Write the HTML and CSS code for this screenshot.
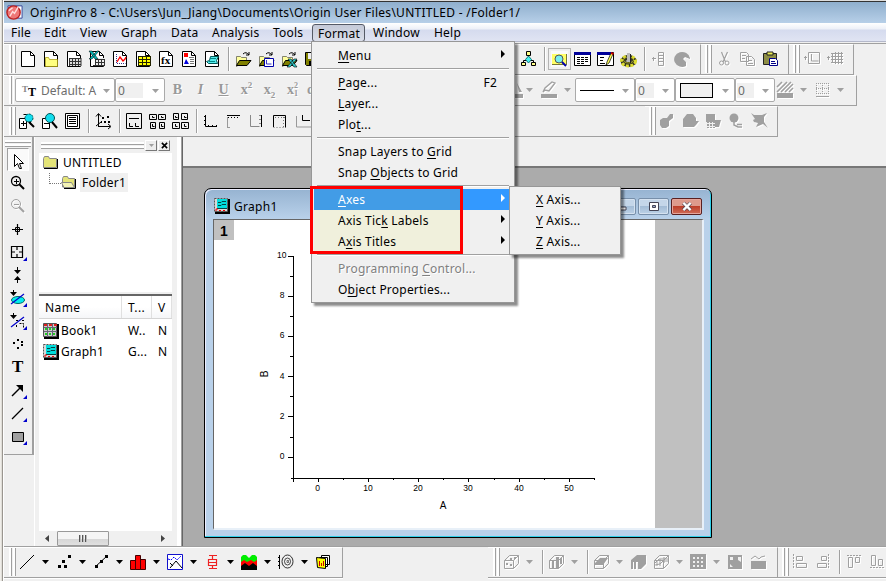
FILE: index.html
```html
<!DOCTYPE html>
<html lang="en">
<head>
<meta charset="utf-8">
<title>OriginPro 8</title>
<link rel="stylesheet" href="styles.css">
</head>
<body>
<svg class="defs" aria-hidden="true">
  <symbol id="page" viewBox="0 0 17 16"><path d="M1.5.5h9l4 4v11h-13z" fill="#fff" stroke="#000"/><path d="M10.500.5v4h4" fill="none" stroke="#000"/></symbol>
  <symbol id="folder" viewBox="0 0 17 16"><path d="M1.500 5.500h4l1 1h5v4H5l-3 5h-.5z" fill="#ffff9c" stroke="#665" stroke-width=".8"/><path d="M4.500 9.500h11.500l-4 5H1.500z" fill="#808000" stroke="#000"/><path d="M8 3q3-3 6 1m0-3v3h-3" fill="none" stroke="#000"/></symbol>
  <symbol id="cube" viewBox="0 0 17 16"><path d="M1.500 6.500l5-5h9v8l-5 5h-9zM1.500 6.500h9v8m0-8l5-5" fill="none" stroke="#a0a0a0"/></symbol>
  <symbol id="corner" viewBox="0 0 4 4"><path d="M4 0v4H0z" fill="#00c"/></symbol>
  <symbol id="down" viewBox="0 0 7 4"><path d="M0 0h7L3.500 4z"/></symbol>
  <symbol id="graphicon" viewBox="0 0 16 16"><path d="M1 1h15v15H1z" fill="#000"/><path d="M.5.5h13v13H.5z" fill="#d8d8d8" stroke="#555" stroke-dasharray="2 1"/><path d="M3 1h10v10H3z" fill="#0dd"/><path d="M4 4.500h3l1-1h4M4 7.500h3l1-1h4M3 10.500h10" stroke="#044" fill="none"/><path d="M1 12h2v-2M5 12.500h2m2 0h2" stroke="#e00" fill="none"/></symbol>
</svg>

<div class="app">
  <header class="titlebar">
    <svg class="logo" viewBox="0 0 18 18"><path d="M2 2h15v13H4z" fill="#fff" stroke="#349"/><circle cx="8" cy="9" r="7" fill="#e77" stroke="#b22" stroke-width="1.500"/><path d="M4 13l3-5 2 2 4-7M3 7l4-3" stroke="#fdd" fill="none" stroke-width="1.500"/></svg>
    <span>OriginPro 8 - C:\Users\Jun_Jiang\Documents\Origin User Files\UNTITLED - /Folder1/</span>
  </header>
  <nav class="menubar">
    <span class="m-file">File</span><span class="m-edit">Edit</span><span class="m-view">View</span><span class="m-graph">Graph</span><span class="m-data">Data</span><span class="m-analysis">Analysis</span><span class="m-tools">Tools</span><span class="m-format">Format</span><span class="m-window">Window</span><span class="m-help">Help</span>
  </nav>

  <div class="bars">
    <div class="row">
      <div class="bar lead1">
        <i class="grip"></i>
        <svg class="ic"><use href="#page"/></svg>
        <svg class="ic"><use href="#page"/><path d="M2.500 6.500h3l1 2h8v7h-12z" fill="#ffff80" stroke="#a09000" stroke-width=".7"/></svg>
        <svg class="ic"><use href="#page"/><path d="M3 7h12v8H3z" fill="#ddd"/><path d="M3 7.500h12M3 10.500h12M3 13.500h12M3.500 7v8M6.500 7v8M9.500 7v8M12.500 7v8M15 7v8" stroke="#333"/></svg>
        <svg class="ic"><use href="#page"/><path d="M6 7h10v8H6z" fill="#eee"/><path d="M6 8.500h10M6 11.500h10M4 14.500h12M6.500 8v7M9.500 8v7M12.500 8v7M15.500 8v7" stroke="#333"/><path d="M0 0h3l6 8H6zM8 0h2L3 8H0z" fill="#0bb" stroke="#000" stroke-width=".5"/></svg>
        <svg class="ic"><use href="#page"/><path d="M4.500 3v9.500h9" stroke="#338" fill="none" stroke-dasharray="1 1"/><path d="M5 11l3-5 3 4 2-2 1-2" stroke="#f00" fill="none" stroke-width="1.300"/></svg>
        <svg class="ic"><use href="#page"/><path d="M3 5h13v10H3z" fill="#ff0"/><path d="M3 5.500h13M3 8.500h13M3 11.500h13M3 14.500h13M3.500 5v10M7.500 5v10M11.500 5v10M15.500 5v10" stroke="#220"/></svg>
        <svg class="ic"><use href="#page"/><text x="3" y="13" class="fx">fx</text></svg>
        <svg class="ic"><use href="#page"/><path d="M3 2h4v4H3z" fill="#f00"/><path d="M3 13l2-5 3 5z" fill="#00d"/><path d="M8 6.500h5M9 8.500h4M9 10.500h4M9 12.500h4" stroke="#777"/></svg>
        <svg class="ic"><use href="#page"/><path d="M6.500 5.500h8l-2 4 1 3h-9l-2-2 3-1z" fill="#5ee" stroke="#055"/><path d="M6 7.500h6M5 10.500h6" stroke="#088"/></svg>
        <i class="sep"></i>
        <svg class="ic"><use href="#folder"/></svg>
        <svg class="ic"><use href="#folder"/><path d="M6.500 7.500h9v8h-9z" fill="#fff" stroke="#00a"/><path d="M8.500 9v4h5" stroke="#33c" fill="none"/></svg>
        <svg class="ic"><use href="#folder"/><path d="M7 8h3l6 8h-3zM13 8h3l-7 8H6z" fill="#3cc" stroke="#000" stroke-width=".6"/></svg>
        <svg class="ic"><path d="M1.500 1.500h14v13h-13l-1-1z" fill="#808000" stroke="#000"/><path d="M4 2h8v6H4z" fill="#eee"/><path d="M5 10h7v4H5z"/></svg>
      </div>
      <div class="bar tail1">
        <svg class="ic"><path d="M8.500 4v5M3.500 12V9.500h10V12" stroke="#000" fill="none"/><path d="M6.500.5h4v4h-4zM1.500 11.500h4v3h-4zM11.500 11.500h4v3h-4z" fill="#ff8" stroke="#000"/><path d="M8.500 5l3 3.500-3 3.500-3-3.500z" fill="#4ee" stroke="#177"/></svg>
        <i class="sep"></i>
        <svg class="ic pressed"><path d="M1 3h15v11H1z" fill="#ff6"/><path d="M1 13.500h12M15.500 3v11" stroke="#773"/><circle cx="8" cy="8" r="4" fill="#7ee" stroke="#555"/><path d="M11 11l4 4" stroke="#00a" stroke-width="2"/></svg>
        <svg class="ic"><path d="M.5 1.500h16v13H.5z" fill="#fff" stroke="#000"/><path d="M0 1h17v3H0z" fill="#009"/><path d="M3 6.500h3m1 0h3m1 0h3M3 8.500h3m1 0h3m1 0h3M3 10.500h3m1 0h3m1 0h3M3 12.500h3m1 0h3" stroke="#000"/></svg>
        <svg class="ic"><path d="M.5 1.500h16v13H.5z" fill="#fff" stroke="#000"/><path d="M0 1h15v3H0z" fill="#009"/><path d="M3 6.500h4M3 9.500h3M3 12.500h5" stroke="#000"/><path d="M14 2l-4 9-1 3 3-2 4-9z" fill="#ff5" stroke="#000" stroke-width=".7"/><path d="M14 1l3 1-1 2-2-1z" fill="#c00"/></svg>
        <svg class="ic"><ellipse cx="8.500" cy="10" rx="5.500" ry="3.500" fill="none" stroke="#332" stroke-width="5"/><ellipse cx="8.500" cy="10" rx="7" ry="5" fill="none" stroke="#dd3" stroke-width="3" stroke-dasharray="3 1.500"/><ellipse cx="8.500" cy="9" rx="5" ry="3" fill="none" stroke="#aa2" stroke-width="1"/><path d="M7 2h3v9H7z" fill="#bbb"/><path d="M10.500 3v9" stroke="#222"/></svg>
        <i class="sep"></i>
        <svg class="ic off"><path d="M1 7.500h4M2.500 6v4M7.500 1.500h5v13h-5zM7 4.500h6M7 7.500h6M7 10.500h6" fill="none" stroke="#a0a0a0"/></svg>
        <svg class="ic off"><path d="M16 7a8 7.500 0 1 0-4 8V11L9 8l2-2 5 2z" fill="#a0a0a0"/></svg>
      </div>
      <div class="bar edit1">
        <i class="grip"></i>
        <svg class="ic off"><path d="M5.500 1l4 10M11.500 1L7 11" stroke="#a0a0a0" stroke-width="1.200" fill="none"/><circle cx="5.500" cy="12" r="2" fill="none" stroke="#a0a0a0"/><circle cx="11" cy="12" r="2" fill="none" stroke="#a0a0a0"/></svg>
        <svg class="ic off"><path d="M1.500 1.500h6l2 2v7h-8zM7.500 5.500h5l3 3v6h-8zM3 4.500h4M3 7.500h3M9 9.500h4M9 12.500h5" fill="none" stroke="#a0a0a0"/></svg>
        <svg class="ic"><path d="M1.500 2.500h13v11h-13z" fill="#8d8d45" stroke="#222"/><path d="M5 1h6v3H5z" fill="#ee5" stroke="#222"/><path d="M7.500 7.500h6l2 2v5h-8z" fill="#fff" stroke="#008"/><path d="M9 10.500h4M9 12.500h5" stroke="#008"/></svg>
      </div>
      <div class="bar col1">
        <i class="grip"></i>
        <svg class="ic off"><path d="M0 6.500h3M1.500 5v4M4.500 1.500h11v11h-11zM7.500 3v7h7" fill="none" stroke="#a0a0a0"/></svg>
        <svg class="ic off"><path d="M0 6.500h3M1.500 5v4M4 2.500h12M4 5.500h12M4 8.500h12M4 11.500h12M5.500 2v10M8.500 1v12M11.500 1v12M14.500 1v12" fill="none" stroke="#a0a0a0"/></svg>
      </div>
    </div>

    <div class="row">
      <div class="bar lead2">
        <i class="grip"></i>
        <div class="combo font"><svg class="tt" viewBox="0 0 14 13"><text x="0" y="8" class="t1">T</text><text x="6" y="12" class="t2">T</text></svg><span>Default: A</span><svg class="dn"><use href="#down"/></svg></div>
        <div class="combo size"><b>0</b><svg class="dn"><use href="#down"/></svg></div>
        <span class="fmt bold">B</span><span class="fmt ital">I</span><span class="fmt und">U</span><span class="fmt">x<sup>2</sup></span><span class="fmt">x<sub>2</sub></span><span class="fmt both">x<span class="stack"><em>2</em><em>1</em></span></span><span class="fmt greek">α</span>
      </div>
      <div class="bar tail2">
        <svg class="ic off"><path d="M0 12h16v4H0zM10 1l5 9h-3z" fill="#a0a0a0"/></svg>
        <svg class="dn"><use href="#down"/></svg>
        <svg class="ic off pen"><path d="M0 12h16v4H0z" fill="#a0a0a0"/><path d="M2 10l2-4 7-6 3 1-6 8-4-1z" fill="none" stroke="#a0a0a0" stroke-width="1.300"/></svg>
        <svg class="dn"><use href="#down"/></svg>
        <div class="combo line"><i class="sample"></i><svg class="dn"><use href="#down"/></svg></div>
        <div class="combo num"><b>0</b><svg class="dn"><use href="#down"/></svg></div>
        <div class="combo line"><i class="box"></i><svg class="dn"><use href="#down"/></svg></div>
        <div class="combo num"><b>0</b><svg class="dn"><use href="#down"/></svg></div>
        <svg class="ic off hatch"><path d="M0 11h16v5H0z" fill="#a0a0a0"/><path d="M0 5l5-5M0 10L10 0M4 10L14 0M8 10l8-8M12 10l4-4" stroke="#a0a0a0" stroke-width="1.600"/></svg>
        <svg class="dn"><use href="#down"/></svg>
        <svg class="ic off"><path d="M2.500 1v11M8.500 1v11M14.500 1v11M2 1.500h13M2 6.500h13M2 11.500h13" stroke="#a0a0a0" stroke-dasharray="1 1"/><path d="M2 14.500h13" stroke="#a0a0a0"/></svg>
        <svg class="dn"><use href="#down"/></svg>
      </div>
    </div>

    <div class="row">
      <div class="bar lead3">
        <i class="grip"></i>
        <svg class="ic"><path d="M1.500 5.500h7v10h-7zM5.500 1.500h7v10" fill="#fff" stroke="#000"/><path d="M3 10.500h5M5.500 8v5" stroke="#000"/><circle cx="11" cy="5" r="4" fill="#1de" stroke="#055" stroke-dasharray="2 1"/><path d="M11 9l5 5" stroke="#000" stroke-width="2"/></svg>
        <svg class="ic"><path d="M1.500 5.500h7v10h-7z" fill="#fff" stroke="#000"/><path d="M3 10.500h5" stroke="#000"/><circle cx="9" cy="5" r="4.500" fill="#1de" stroke="#055"/><path d="M11 9l5 6" stroke="#000" stroke-width="2"/></svg>
        <svg class="ic"><path d="M1.500.5h14v15h-14zM3.500 2.500h10v11h-10z" fill="#fff" stroke="#000"/><path d="M5 4.500h7M5 6.500h7M5 8.500h7M5 10.500h7" stroke="#000"/></svg>
        <i class="sep"></i>
        <svg class="ic"><path d="M3.500 1v12M1 3.500l2.500-3 2.500 3M3 13.500h12M13 11l3 2.500-3 2.500M1 13l5-4" fill="none" stroke="#000"/><path d="M7 4h2v2H7zM12 3h2v2h-2zM9 8h2v2H9zM6 8h1v2H6zM13 8h2v2h-2z"/></svg>
        <i class="sep"></i>
        <svg class="ic"><path d="M.5.5h15v15H.5zM3 5.500h10M3.500 10v3.500H7M9.500 10v3.500H13" fill="none" stroke="#000"/></svg>
        <svg class="ic"><path d="M.5 1.500h7v5h-7zM9.500 1.500h7v5h-7zM1.500 9.500h5v6h-5zM10.500 9.500h5v6h-5zM3.500 3v1.500h2M12.500 3v1.500h2M3.500 11v2.500h2M12.500 11v2.500h2" fill="none" stroke="#000"/></svg>
        <svg class="ic"><path d="M1.500.5h5v6h-5zM9.500.5h6v6h-6zM.5 9.500h7v6h-7zM9.500 9.500h7v6h-7zM3.500 3v1.500h2M12.500 3v1.500h2M3.500 11v2.500h2M12.500 11v2.500h2" fill="none" stroke="#000"/></svg>
        <i class="sep"></i>
        <svg class="ic"><path d="M2.500 2v11.500H14" fill="none" stroke="#000"/><path d="M1 3.500h1M1 7.500h1M1 11.500h1M5.500 12v2M9.500 12v2M13.500 12v2" stroke="#000"/></svg>
        <svg class="ic"><path d="M1 2.500h13" stroke="#000"/><path d="M2 4.500h12" stroke="#000" stroke-dasharray="1 2"/><path d="M1.500 4v10M1 14.500h3" fill="none" stroke="#999"/></svg>
        <svg class="ic"><path d="M12.500 2v12" stroke="#000"/><path d="M1.500 2v11.500h9M10 2.500h2M10 6.500h2M10 10.500h2" stroke="#888" fill="none"/></svg>
        <svg class="ic"><path d="M1.500 14V2.500h12v12" stroke="#000" fill="none"/><path d="M1.500 14.500h12M3 4.500h10M11.500 4v10" stroke="#777" fill="none" stroke-dasharray="1 2"/></svg>
        <svg class="ic"><path d="M1.500 3v11h15" stroke="#999" fill="none"/><path d="M7.500 2v5.500H15" stroke="#000" fill="none"/></svg>
      </div>
      <div class="bar tail3">
        <i class="grip"></i>
        <svg class="ic off"><path d="M1 7l3-2h4l3-4h3v4l-4 3v5l-3 2H3l-2-3z" fill="#a0a0a0"/></svg>
        <svg class="ic off"><path d="M1 6l4-5h6l3 4v3h3l-3 4-2 2H1z" fill="#a0a0a0"/></svg>
        <svg class="ic off"><path d="M1 1h9v6h6l-2 7h-4v1H2V9H1z" fill="#a0a0a0"/><path d="M2 10.500h8M2 13.500h8M4.500 9v6M7.500 9v6" stroke="#f0f0f0"/></svg>
        <svg class="ic off"><circle cx="6" cy="5" r="4.500" fill="#a0a0a0"/><path d="M6 9v3l4 2h4M9 11.500h5" fill="none" stroke="#a0a0a0" stroke-width="1.500"/></svg>
        <svg class="ic off"><path d="M0 0l3 2h8l5-2-3 4v5l4 6-5-4-7 3 2-4-4-1-1-2 2-1z" fill="#a0a0a0"/></svg>
      </div>
    </div>
  </div>

  <main class="work">
    <aside class="tools">
      <i class="hgrip"></i>
      <div class="tool down"><svg viewBox="0 0 17 16"><path d="M4.500 1.500v12l3-3 2 5h2l-2-5h4z" fill="#fff" stroke="#000"/></svg></div>
      <div class="tool"><svg viewBox="0 0 17 16"><circle cx="7" cy="6" r="4.500" fill="none" stroke="#000" stroke-width="1.300"/><path d="M5 6.500h5M7.500 4v5" stroke="#000"/><path d="M10 9l5 5" stroke="#000" stroke-width="2"/></svg></div>
      <div class="tool off"><svg viewBox="0 0 17 16"><circle cx="7" cy="6" r="4.500" fill="none" stroke="#a0a0a0"/><path d="M5 6.500h5" stroke="#a0a0a0"/><path d="M10 9l5 5" stroke="#a0a0a0" stroke-width="2"/></svg></div>
      <div class="tool"><svg viewBox="0 0 17 16"><path d="M3 8.500h11M8.500 3v11" stroke="#000" stroke-width="1.200"/><path d="M6.500 6.500h4v4h-4z" fill="none" stroke="#000"/></svg></div>
      <div class="tool"><svg viewBox="0 0 17 16"><path d="M2.500 2.500h11v11h-11zM3 8h3m4 0h3M8 3v3m0 4v3" fill="none" stroke="#000" stroke-width="1.200"/></svg><svg class="cn"><use href="#corner"/></svg></div>
      <div class="tool"><svg viewBox="0 0 17 16"><path d="M8.500 0v4M8.500 12v4" stroke="#000"/><path d="M5 3h7L8.500 7zM5 13h7L8.500 9z"/></svg></div>
      <div class="tool"><svg viewBox="0 0 17 16"><ellipse cx="9" cy="10" rx="6.500" ry="3.500" fill="#0ee" stroke="#066"/><path d="M2 14L15 4" stroke="#00c" stroke-width="1.200"/><path d="M1 2h7L4.500 6zM4 0h1v3H4z"/></svg><svg class="cn"><use href="#corner"/></svg></div>
      <div class="tool"><svg viewBox="0 0 17 16"><path d="M2 14L15 4" stroke="#00c" stroke-width="1.200"/><path d="M7 7.500h3m3 0h2M7.500 14v-3m3-.5h4v4" stroke="#000" fill="none" stroke-dasharray="2 1"/><path d="M1 2h7L4.500 6zM4 0h1v3H4z"/></svg><svg class="cn"><use href="#corner"/></svg></div>
      <div class="tool"><svg viewBox="0 0 17 16"><path d="M4 6h2v2H4zM8 3h2v2H8zM12 5h2v2h-2zM8 11h2v2H8zM12 8h2v2h-2z"/></svg></div>
      <div class="tool letter">T</div>
      <div class="tool"><svg viewBox="0 0 17 16"><path d="M3 14L12 5" stroke="#000" stroke-width="1.500"/><path d="M7 3h7v7z"/></svg><svg class="cn"><use href="#corner"/></svg></div>
      <div class="tool"><svg viewBox="0 0 17 16"><path d="M3 14L14 3" stroke="#000" stroke-width="1.300"/></svg><svg class="cn"><use href="#corner"/></svg></div>
      <div class="tool"><svg viewBox="0 0 17 16"><path d="M3.500 4.500h11v9h-11z" fill="#a0a0a0" stroke="#000"/></svg><svg class="cn"><use href="#corner"/></svg></div>
    </aside>

    <aside class="explorer">
      <div class="cap"><i class="hgrip"></i><button class="tiny"><svg class="dn"><use href="#down"/></svg></button><button class="tiny"><svg viewBox="0 0 8 8" class="x"><path d="M1 1l6 6M7 1L1 7" stroke="#000" stroke-width="1.800"/></svg></button></div>
      <div class="tree">
        <div class="node"><svg class="fold" viewBox="0 0 16 13"><path d="M.5 11.500v-9l1-2h4l1 2h7v9z" fill="#e4e478" stroke="#888"/><path d="M14.500 3v9.500H1" stroke="#000" fill="none"/></svg>UNTITLED</div>
        <div class="node child"><i class="branch"></i><svg class="fold" viewBox="0 0 16 13"><path d="M1.500 11V2.500l1-2h4l1 2h6v9z" fill="#e4e478" stroke="#888"/><path d="M.5 6.500h10l3 5H3z" fill="#f2f2b4" stroke="#888"/><path d="M14.500 3v9.500H3" stroke="#000" fill="none"/></svg><span>Folder1</span></div>
      </div>
      <div class="list">
        <div class="cols head"><span>Name</span><span>T...</span><span>V</span></div>
        <div class="cols"><span><svg class="wi" viewBox="0 0 16 16"><path d="M1 1h15v15H1z"/><path d="M.5.5h13v13H.5z" fill="#ccc" stroke="#555"/><path d="M1 2h13" stroke="#d22" stroke-width="2" stroke-dasharray="3 2"/><path d="M2 6h12M2 11h12" stroke="#2c2" stroke-width="2" stroke-dasharray="2 2"/><path d="M4.500 1v13M9.500 1v13M1 4.500h13M1 8.500h13" stroke="#667"/></svg>Book1</span><span>W..</span><span>N</span></div>
        <div class="cols"><span><svg class="wi"><use href="#graphicon"/></svg>Graph1</span><span>G...</span><span>N</span></div>
        <div class="scroll"><svg class="sa" viewBox="0 0 5 7"><path d="M4 0v7L0 3.500z"/></svg><div class="thumb"><i></i><i></i><i></i></div><svg class="sa end" viewBox="0 0 5 7"><path d="M0 0v7l4-3.500z"/></svg></div>
      </div>
    </aside>

    <section class="desk">
      <div class="win">
        <div class="wtitle"><svg class="wi"><use href="#graphicon"/></svg><span>Graph1</span>
          <button class="wb"><svg viewBox="0 0 12 8"><path d="M1 4.500h10v3H1z" fill="#fff" stroke="#445"/></svg></button><button class="wb"><svg viewBox="0 0 12 9"><path d="M1.500.5h9v8h-9z" fill="#fff" stroke="#445"/><path d="M4.500 3.500h3v2h-3z" fill="#9ac" stroke="#445"/></svg></button><button class="wb close"><svg viewBox="0 0 12 10"><path d="M2 1l8 8M10 1L2 9" stroke="#445" stroke-width="4"/><path d="M2 1l8 8M10 1L2 9" stroke="#fff" stroke-width="2.500"/></svg></button>
        </div>
        <div class="client">
          <div class="paper">
            <div class="layer">1</div>
            <svg class="plot" viewBox="214 220 441 307">
              <path d="M293.500 256v226M291 478.500h303.500M288 256.500h5M288 296.500h5M288 336.500h5M288 376.500h5M288 416.500h5M288 457.500h5M290 276.500h3M290 316.500h3M290 356.500h3M290 396.500h3M290 437.500h3M318.500 478v4M368.500 478v4M418.500 478v4M468.500 478v4M519.500 478v4M569.500 478v4M343.500 478v2M393.500 478v2M443.500 478v2M494.500 478v2M544.500 478v2M594.500 478v2" stroke="#000" fill="none" class="axes"/>
              <g class="yl"><text x="286.500" y="258">10</text><text x="284.500" y="298">8</text><text x="284.500" y="338">6</text><text x="284.500" y="379">4</text><text x="284.500" y="419">2</text><text x="284.500" y="459">0</text></g>
              <g class="xl"><text x="317.500" y="491">0</text><text x="368" y="491">10</text><text x="418" y="491">20</text><text x="468" y="491">30</text><text x="519" y="491">40</text><text x="569" y="491">50</text></g>
              <text class="name" x="443" y="509">A</text>
              <text class="name" transform="translate(268 374) rotate(-90)">B</text>
            </svg>
          </div>
        </div>
      </div>
    </section>
  </main>

  <footer class="bottom">
    <div class="bar plotbar">
      <i class="grip"></i>
      <svg class="ic"><path d="M1 15L15 1" stroke="#000"/></svg><svg class="dn"><use href="#down"/></svg>
      <svg class="ic"><path d="M2 11h3v3H2zM6 6h3v3H6zM8 11h3v3H8zM12 1h3v3h-3z"/></svg><svg class="dn"><use href="#down"/></svg>
      <svg class="ic"><path d="M2 13L14 2" stroke="#000"/><path d="M2 11h3v3H2zM7 6h3v3H7zM12 1h3v3h-3z"/></svg><svg class="dn"><use href="#down"/></svg>
      <svg class="ic"><path d="M.5 6.500h5v9h-5zM5.500 1.500h5v14h-5zM10.500 5.500h5v10h-5z" fill="#f00" stroke="#400"/></svg><svg class="dn"><use href="#down"/></svg>
      <svg class="ic"><path d="M.5.5h15v15H.5z" fill="#fff" stroke="#11c"/><path d="M1 5l3 1 3-3 3 3 4-4" stroke="#00f" fill="none" stroke-dasharray="2 1"/><path d="M3 14l6-7 6 7M3 9l3 3" stroke="#000" fill="none"/></svg><svg class="dn"><use href="#down"/></svg>
      <svg class="ic"><path d="M5 1.500h8M5 14.500h8M8.500 1v5M8.500 11v4M4.500 5.500h8v6h-8zM4 8.500h9" fill="none" stroke="#e22" stroke-width="1.200"/></svg><svg class="dn"><use href="#down"/></svg>
      <svg class="ic"><path d="M0 3l2-2h3l3 3 3-3h3l2 2v9H0z" fill="#0e0"/><path d="M0 8l3-2 3 2 4-2 3 2 3-2v7H0z" fill="#f00"/><path d="M0 12l4-3 4 3 4-3 4 3v4H0z"/></svg><svg class="dn"><use href="#down"/></svg>
      <svg class="ic"><path d="M1.500 1v14M0 3.500h2M0 7.500h2M0 11.500h2" stroke="#000"/><ellipse cx="9.500" cy="7.500" rx="5.500" ry="6.500" fill="none" stroke="#000" stroke-width=".8"/><ellipse cx="9.500" cy="7.500" rx="3" ry="3.500" fill="none" stroke="#000" stroke-width=".7"/><path d="M9 6.500h1.500v2H9z" fill="none" stroke="#000" stroke-width=".5"/></svg><svg class="dn"><use href="#down"/></svg>
      <svg class="ic"><path d="M6.500 1.500h8v9h-8zM4.500 3.500h8v9h-8z" fill="#fff" stroke="#000"/><path d="M1.500 3.500l9 1v10l-8-1z" fill="#ff0" stroke="#000"/><path d="M4.500 7v5M6.500 9v3M8.500 7v5" stroke="#c00"/></svg>
    </div>
    <div class="bar cubes">
      <i class="grip"></i>
      <svg class="ic off"><use href="#cube"/><path d="M3 9h2v2H3zM7 10h2v2H7zM7 4h2v2H7zM11 3h2v2h-2z" fill="#a0a0a0"/></svg><svg class="dn"><use href="#down"/></svg><i class="sep"></i>
      <svg class="ic off"><use href="#cube"/><path d="M4 6h2v8H4zM8 3h3v11H8zM12 4h2v6h-2z" fill="#a0a0a0"/></svg><svg class="dn"><use href="#down"/></svg><i class="sep"></i>
      <svg class="ic off"><use href="#cube"/><path d="M2 9l5-5h8l-5 7H2z" fill="#a0a0a0"/></svg><svg class="dn"><use href="#down"/></svg>
      <svg class="ic off wide"><path d="M1 6l6-5h9v9l-5 5H8V8H6v7H4V8H3v7H1z" fill="#a0a0a0"/></svg>
      <svg class="ic off"><use href="#cube"/><path d="M2 9l4-4h9M2 11l5-1 3-3h5M4 12V7M7 12V5M11 9V3" fill="none" stroke="#a0a0a0"/></svg><svg class="dn"><use href="#down"/></svg>
      <svg class="ic off"><path d="M0 0h16v15H0z" fill="#a0a0a0"/><path d="M3 3h2v2H3zM7 3h2v2H7zM11 3h2v2h-2zM3 7h2v2H3zM7 7h2v2H7zM11 7h2v2h-2zM3 11h2v2H3zM7 11h2v2H7zM11 11h2v2h-2z" fill="#f0f0f0"/></svg><svg class="dn"><use href="#down"/></svg>
      <svg class="ic off wide"><path d="M1 1h14v14H1z" fill="#a0a0a0"/><path d="M3 3h3v3H3zM11 3h3v5l-3-2zM3 10l3 3H3z" fill="#f0f0f0"/></svg>
      <svg class="ic off"><path d="M1 7h15v8H1z" fill="#a0a0a0"/><path d="M1 5l4-3 4 3 2-2 4-1" fill="none" stroke="#a0a0a0"/></svg>
    </div>
    <div class="bar align">
      <i class="grip"></i>
      <svg class="ic off"><path d="M1.500 0v15" stroke="#a0a0a0" stroke-dasharray="2 1"/><path d="M4.500 2.500h6v4h-6zM4.500 9.500h10v4h-10z" fill="none" stroke="#a0a0a0"/></svg>
      <svg class="ic off"><path d="M13.500 0v15" stroke="#a0a0a0" stroke-dasharray="2 1"/><path d="M6.500 2.500h5v4h-5zM2.500 9.500h9v4h-9z" fill="none" stroke="#a0a0a0"/></svg>
      <i class="sep"></i>
      <svg class="ic off"><path d="M1 1.500h14" stroke="#a0a0a0" stroke-dasharray="2 1"/><path d="M2.500 3.500h4v10h-4zM9.500 3.500h4v5h-4z" fill="none" stroke="#a0a0a0"/></svg>
      <svg class="ic off"><path d="M1 13.500h14" stroke="#a0a0a0" stroke-dasharray="2 1"/><path d="M2.500 1.500h4v10h-4zM9.500 5.500h4v6h-4z" fill="none" stroke="#a0a0a0"/></svg>
    </div>
  </footer>
</div>

<div class="menu">
  <div class="item"><span><u>M</u>enu</span><i class="arr"></i></div>
  <hr>
  <div class="item"><span><u>P</u>age...</span><span class="key">F2</span></div>
  <div class="item"><span><u>L</u>ayer...</span></div>
  <div class="item"><span>Plo<u>t</u>...</span></div>
  <hr>
  <div class="item"><span>Snap Layers to <u>G</u>rid</span></div>
  <div class="item"><span>Snap <u>O</u>bjects to Grid</span></div>
  <hr>
  <div class="item sel"><span><u>A</u>xes</span><i class="arr"></i></div>
  <div class="item mark"><span>Axis Tic<u>k</u> Labels</span><i class="arr"></i></div>
  <div class="item mark"><span>A<u>x</u>is Titles</span><i class="arr"></i></div>
  <hr>
  <div class="item dis"><span>Programming <u>C</u>ontrol...</span></div>
  <div class="item"><span>O<u>b</u>ject Properties...</span></div>
</div>
<div class="menu sub">
  <div class="item"><span><u>X</u> Axis...</span></div>
  <div class="item"><span><u>Y</u> Axis...</span></div>
  <div class="item"><span><u>Z</u> Axis...</span></div>
</div>
<div class="callout"></div>
</body>
</html>
```

FILE: styles.css
```css
* { box-sizing: border-box; }
body {
  margin: 0; width: 886px; height: 581px; overflow: hidden; position: relative;
  background: #f0f0f0; color: #000;
  font: 12px/21px "Noto Sans", "Open Sans", sans-serif;
}
svg { display: block; flex: none; overflow: visible; }
.defs { position: absolute; width: 0; height: 0; }
i { display: block; flex: none; }
button { padding: 0; margin: 0; }
.app {
  height: 581px; display: flex; flex-direction: column; padding-left: 4px;
  background: linear-gradient(90deg, #f0eeea 1px, #e0ded8 1px 2px, #9a9690 2px 3px, #fff 3px 4px, #f0f0f0 4px);
}
.titlebar {
  height: 23px; flex: none; display: flex; align-items: center; gap: 7px; padding: 0 0 0 2px;
  border-top: 1px solid #ddd; background: linear-gradient(#333 1px, #8fafcd 1px, #b7cfe8);
  letter-spacing: .27px;
}
.logo { width: 17px; height: 17px; }
.menubar {
  height: 21px; flex: none; display: flex; align-items: flex-start; padding-left: 7px;
  background: linear-gradient(#fff, #edf0f8 6px, #d5dbee 7px, #e0e4f3 18px, #b4b8ca 18px 19px, #f0f0f0 19px 20px, #a0a0a0 20px);
  line-height: 20px; letter-spacing: .22px; white-space: nowrap;
}
.m-file { width: 33px; } .m-edit { width: 36px; } .m-view { width: 41px; } .m-graph { width: 50px; }
.m-data { width: 41px; } .m-analysis { width: 61px; } .m-tools { width: 39px; }
.m-format { width: 53px; height: 18px; margin: 1px 8px 0 0; padding-left: 5px; line-height: 17px; border: 1px solid #555a66; border-radius: 3px; background: linear-gradient(#c5cad8, #dadeea); }
.m-window { width: 61px; }

.bars { flex: none; }
.row { display: flex; height: 31px; }
.bar {
  display: flex; align-items: center; flex: none; height: 31px; padding: 0 0 1px 5px;
  border-top: 1px solid #fff; border-bottom: 1px solid #a0a0a0; border-right: 1px solid #a0a0a0;
}
.grip { width: 7px; height: 28px; background: linear-gradient(90deg, #fff 2px, #a0a0a0 2px 3px, #f0f0f0 3px 4px, #fff 4px 6px, #a0a0a0 6px); }
.ic { width: 17px; height: 16px; margin: 0 3px; }
.off { filter: drop-shadow(1px 1px 0 #fff); }
.sep { width: 2px; height: 24px; margin: 0 2px 0 4px; background: linear-gradient(90deg, #a0a0a0 1px, #fff 1px); }
.dn { width: 7px; height: 4px; fill: #a0a0a0; }
.fx { font: bold 11px "Liberation Serif", serif; }
.pressed { outline: 1px solid #b4b4b4; outline-offset: 2px; background: #fafafa; }

.lead1, .lead2, .lead3 { border-right: 0; overflow: hidden; }
.lead1 { width: 513px; }
.tail1 { width: 184px; padding-left: 0; }
.edit1 { width: 88px; padding-left: 4px; }
.col1 { width: 65px; padding-left: 4px; }
.lead1 .grip, .edit1 .grip, .col1 .grip { margin-right: 1px; }

.lead2 { width: 503px; }
.lead2 .grip { width: 5px; margin-right: 1px; }
.combo { display: flex; align-items: center; height: 24px; flex: none; background: #fff; border: 1px solid #aaa; border-radius: 2px; color: #6d6d6d; overflow: hidden; white-space: nowrap; }
.combo .dn { margin: 2px 5px 0 auto; }
.combo b { font-weight: normal; background: #f0f0f0; width: 26px; height: 15px; line-height: 15px; padding-left: 1px; margin-left: 1px; }
.font { width: 100px; padding-left: 6px; }
.font span { margin-left: 5px; letter-spacing: 0; }
.font .dn { margin-right: 4px; }
.tt { width: 14px; height: 13px; }
.t1 { font: bold 9px "Liberation Serif", serif; fill: #888; }
.t2 { font: bold 12px "Liberation Serif", serif; fill: #000; }
.size { width: 50px; margin-right: 1px; }
.fmt { width: 23px; text-align: center; font: bold 14px/20px "Liberation Serif", serif; color: #999; text-shadow: 1px 1px #fff; }
.fmt sup, .fmt sub { font-size: 9px; line-height: 0; }
.both { display: flex; justify-content: center; align-items: center; }
.stack { display: flex; flex-direction: column; font: bold 8px/8px "Liberation Serif", serif; }
.stack em { font-style: normal; }
.greek { width: 14px; }
.ital { font-style: italic; } .und { text-decoration: underline; }
.tail2 { width: 350px; padding-left: 0; }
.tail2 > .ic { margin: 0 3px 0 0; }
.tail2 > .dn { margin: 0 5px 0 -1px; }
.tail2 > .pen { margin-left: 3px; }
.tail2 > .pen + .dn { margin: 0 4px 0 3px; }
.line { width: 60px; }
.num { width: 40px; }
.num b { width: 17px; }
.sample { width: 34px; height: 1px; background: #000; margin-left: 4px; }
.box { width: 33px; height: 15px; border: 1px solid #000; background: #f0f0f0; margin-left: 4px; }
.tail2 > .hatch { margin-left: 2px; }
.tail2 > .hatch ~ .dn { margin: 0 7px 0 3px; }
.tail2 > .pen + .dn { margin-left: 3px; }

.lead3 { width: 641px; border-top-color: #f0f0f0; }
.lead3 .grip { margin-right: -1px; }
.tail3 { width: 133px; padding-left: 4px; }

.work { flex: 1; display: flex; min-height: 0; }
.tools { width: 30px; height: 318px; flex: none; padding-top: 3px; border-right: 2px solid #a0a0a0; border-bottom: 1px solid #a0a0a0; }
.hgrip { height: 7px; background: linear-gradient(#fff 2px, #a0a0a0 2px 3px, #f0f0f0 3px 4px, #fff 4px 6px, #a0a0a0 6px); }
.tools .hgrip { margin: 0 1px 1px; }
.tool { position: relative; height: 23px; padding: 4px 0 0 5px; }
.tool > svg { width: 17px; height: 16px; }
.tool > .cn { position: absolute; left: 19px; top: 17px; width: 4px; height: 4px; }
.down { margin: 0 3px; width: 22px; padding-left: 2px; border: 1px solid; border-color: #a0a0a0 #fff #fff #a0a0a0; background: #fafafa; }
.letter { font: bold 17px/16px "Liberation Serif", serif; padding-left: 8px; }

.explorer { width: 149px; flex: none; padding: 3px 11px 0 5px; display: flex; flex-direction: column; background: linear-gradient(90deg, #fff 1px, #f0f0f0 1px 143px, #fff 143px 147px, #a0a0a0 147px 148px, #666 148px); }
.cap { display: flex; height: 12px; margin-left: 2px; }
.cap .hgrip { width: 103px; margin-top: 2px; }
.tiny { width: 12px; height: 11px; margin-left: 1px; border: 1px solid; border-color: #fff #777 #777 #fff; background: #eee; display: flex; align-items: center; justify-content: center; }
.tiny .dn { width: 5px; height: 3px; }
.x { width: 7px; height: 7px; }
.tree { height: 139px; background: #fff; margin-top: 1px; font-size: 12px; letter-spacing: .2px; }
.node { display: flex; align-items: center; height: 20px; padding-left: 4px; }
.node .fold { margin-right: 4px; }
.fold { width: 16px; height: 13px; }
.child { padding-left: 10px; }
.branch { width: 12px; height: 11px; border: dotted #777; border-width: 0 0 1px 1px; margin-bottom: 9px; }
.child .fold { margin-right: 3px; }
.child span { background: #f0f0f0; padding: 0 2px; line-height: 19px; }
.list { margin-top: 2px; height: 253px; background: #fff; border-top: 2px solid #666; display: flex; flex-direction: column; }
.cols { display: grid; grid-template-columns: 83px 30px 20px; height: 21px; align-items: center; letter-spacing: .2px; }
.cols span { display: flex; align-items: center; padding-left: 6px; line-height: 20px; }
.cols span:first-child { padding-left: 4px; gap: 2px; }
.head { height: 23px; background: linear-gradient(#fff 50%, #f5f6f8); border-bottom: 1px solid #d5d5d5; margin-bottom: 2px; }
.head span { border-right: 1px solid #e0e0e0; height: 22px; letter-spacing: .4px; padding-top: 2px; }
.head span:first-child { padding-left: 6px; }
.wi { width: 16px; height: 16px; }
.scroll { margin-top: auto; height: 15px; display: flex; align-items: center; background: #f0f0f0; padding: 0 6px; }
.sa { width: 5px; height: 7px; fill: #444; }
.thumb { width: 52px; height: 15px; margin-left: 7px; border: 1px solid #999; border-radius: 1px; background: linear-gradient(#f5f5f5 50%, #d5d5d5 50%, #e0e0e0); display: flex; justify-content: center; align-items: center; gap: 1px; }
.thumb i { width: 2px; height: 7px; background: linear-gradient(90deg, #555 1px, #bbb 1px); }
.end { margin-left: auto; }

.desk { position: relative; flex: 1; margin-top: 29px; background: #ababab; border-top: 2px solid #777; overflow: hidden; }
.win { position: absolute; left: 21px; top: 20px; width: 508px; height: 350px; border: 1px solid #000; border-radius: 7px 7px 0 0; background: linear-gradient(#96b3d1, #b9d1ea 30px); box-shadow: inset -1px -1px #30cfe8, inset 1px 1px #eef; padding: 0 7px 7px 8px; }
.wtitle { display: flex; align-items: center; height: 30px; padding-top: 4px; }
.wtitle .wi { margin: 0 4px 0 1px; }
.wtitle span { margin-right: auto; letter-spacing: .3px; }
.wb { width: 31px; height: 17px; margin-left: 2px; border: 1px solid #778faa; border-radius: 2px; box-shadow: inset 0 0 0 1px #d5e2f0; background: linear-gradient(#c4d6e9 50%, #a3bcd6 50%, #bdd2e7); display: flex; align-items: center; justify-content: center; }
.wb:last-child { margin-right: 2px; }
.wb svg { width: 12px; height: 9px; }
.close { border-color: #5a2020; box-shadow: inset 0 0 0 1px #e5a59b; background: linear-gradient(#dd9a8c 50%, #bd3f2a 50%, #cf6d58); }
.client { height: 311px; border: 1px solid #666; border-width: 1px 2px 2px 1px; border-color: #666 #e8f0f8 #e8f0f8 #666; background: #c0c0c0; }
.paper { width: 441px; height: 308px; background: #fff; position: relative; }
.layer { position: absolute; left: 0; top: 0; width: 20px; height: 20px; background: #c0c0c0; font: bold 14px/22px "Liberation Sans", sans-serif; text-align: center; }
.plot { width: 441px; height: 307px; font: 8.500px "Liberation Sans", sans-serif; }
.axes { shape-rendering: crispEdges; }
.yl { text-anchor: end; } .xl, .name { text-anchor: middle; }
.name { font-size: 10px; }

.bottom { display: flex; height: 35px; flex: none; border-top: 1px solid #a0a0a0; }
.bottom .bar { box-shadow: 0 1px #fff; }
.bottom .dn { fill: #000; margin: 0 7px 0 6px; }
.bottom .ic { margin: 0; }
.plotbar { width: 339px; }
.plotbar .grip { margin-right: 3px; }
.bottom .cubes { width: 290px; margin-left: 145px; }
.cubes .grip { margin-right: 3px; }
.bottom .cubes .dn { fill: #a0a0a0; }
.cubes .sep { margin: 0 4px 0 2px; }
.bottom .wide { margin-right: 6px; }
.align { flex: 1; padding-left: 4px; border-right: 0; overflow: hidden; }
.align .grip { margin-right: 0; }
.bottom .align .ic { margin: 0 3px; }

.menu { position: absolute; left: 311px; top: 41px; width: 204px; height: 262px; padding: 3px 2px; background: #f0f0f0; border: 1px solid #979797; box-shadow: 3px 3px 2px rgba(0,0,0,.45); white-space: nowrap; letter-spacing: .22px; }
.menu hr { height: 6px; margin: 0 3px; border: 0; background: linear-gradient(transparent 2px, #a0a0a0 2px 3px, #fff 3px 4px, transparent 4px); }
.item { display: flex; height: 21px; padding: 0 6px 0 24px; line-height: 21px; }
.item u { text-underline-offset: 2px; text-decoration-thickness: 1px; }
.key { margin: 0 9px 0 auto; }
.arr { margin: 5px 1px 0 auto; width: 4px; height: 8px; background: #000; clip-path: polygon(0 0, 100% 50%, 0 100%); }
.sel { color: #fff; background: linear-gradient(90deg, #429ce6 148px, #3399ff 148px); }
.sel .arr { background: #fff; }
.mark { background: linear-gradient(90deg, #f0f0dc 148px, #f0f0f0 148px); }
.dis { color: #808080; text-shadow: 1px 1px #fff; }
.sub { left: 509px; top: 186px; width: 112px; height: 69px; padding-top: 2px; }
.callout { position: absolute; left: 310px; top: 186px; width: 153px; height: 68px; border: 3px solid #f00; }
```
